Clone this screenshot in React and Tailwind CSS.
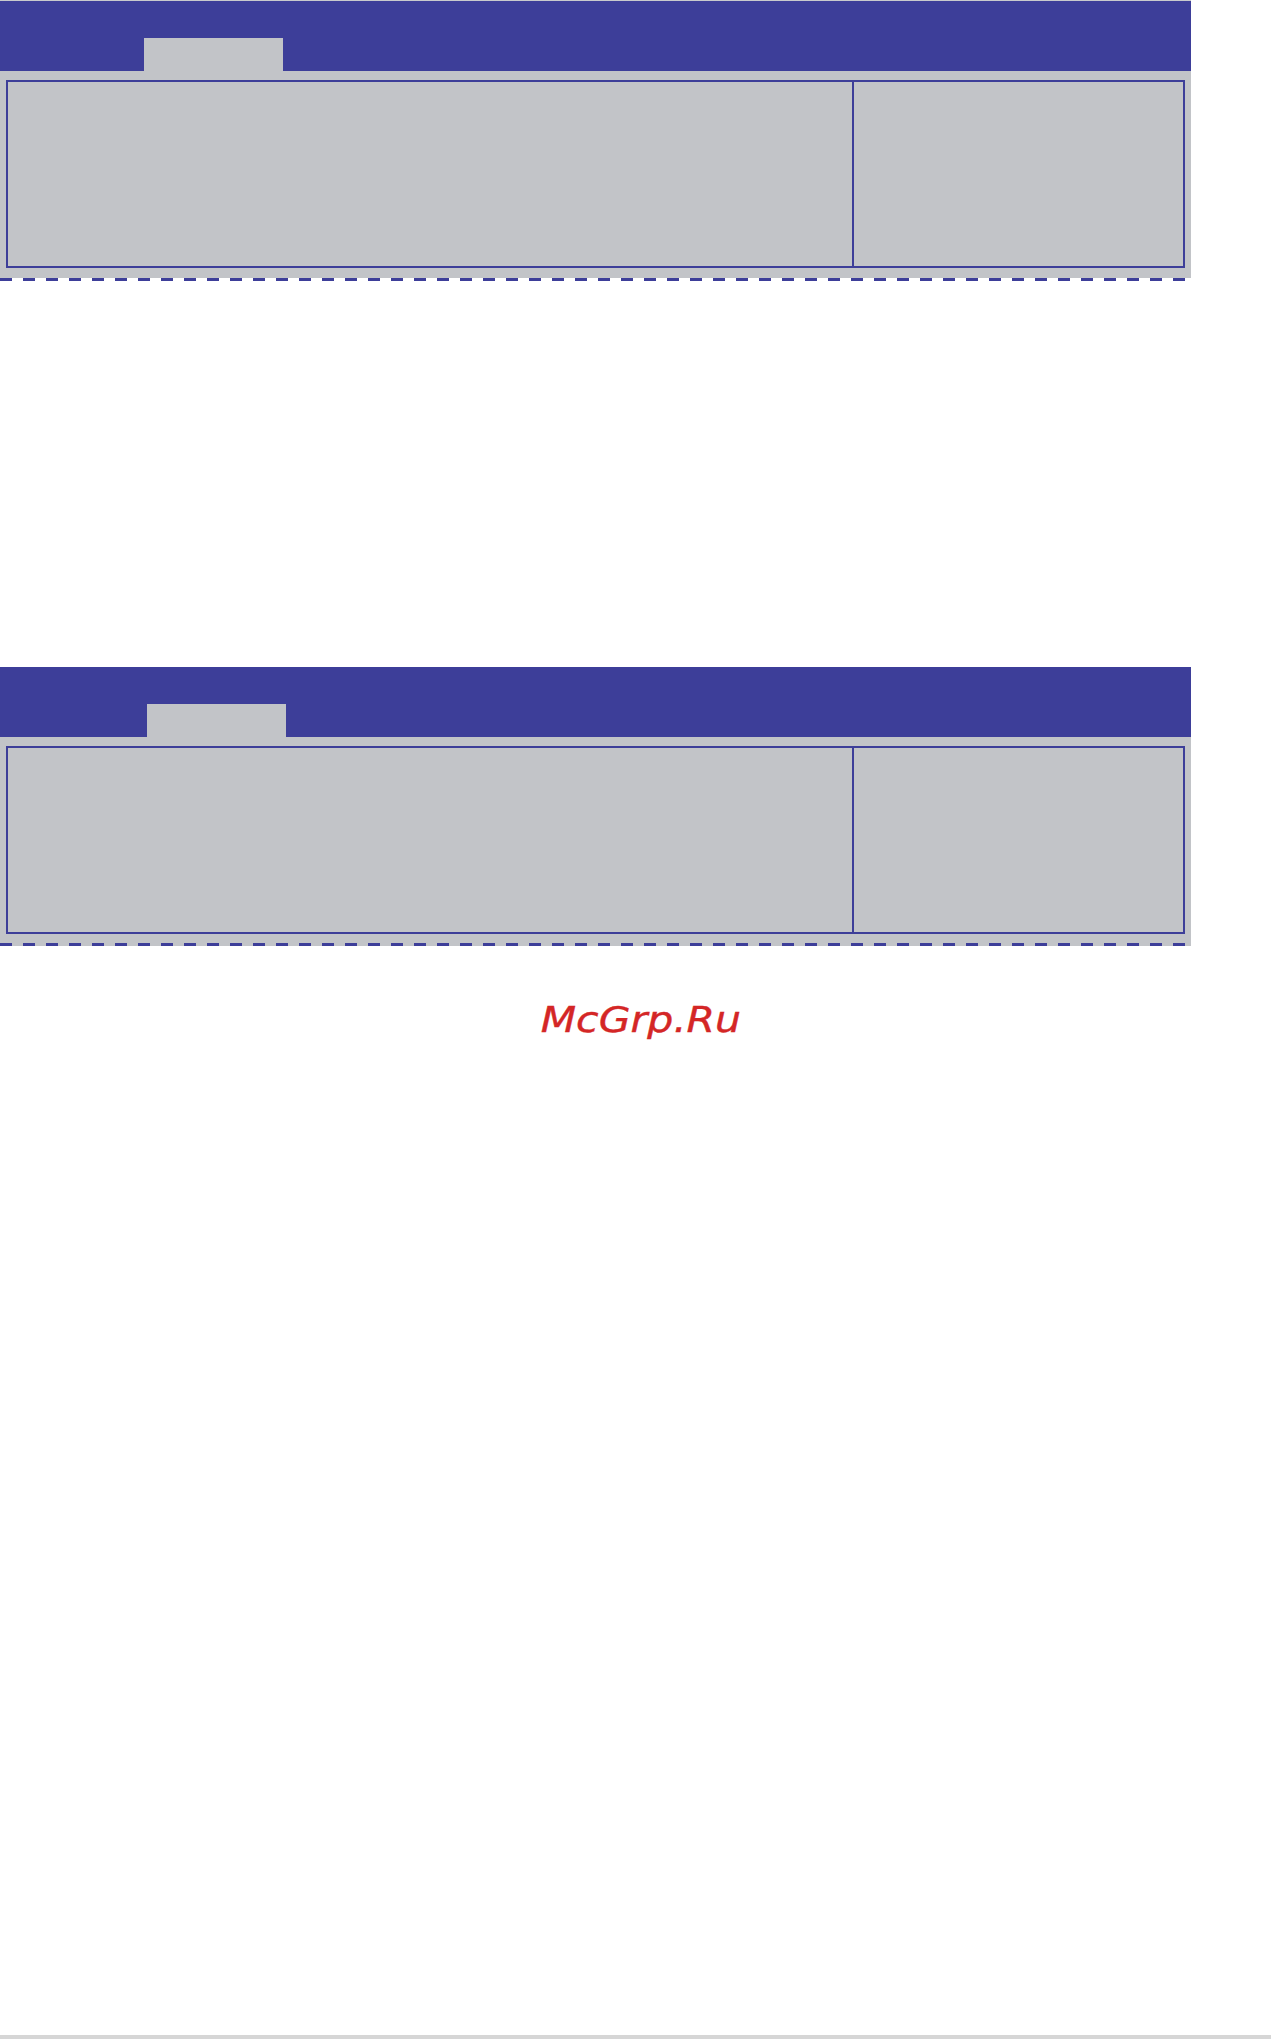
export default function App() {
  const Panel = ({ tabLeft, first }) => (
    <div className="w-[1191px]">
      {first && <div className="h-px bg-[#c9cacd]" />}
      {/* title bar with the raised tab */}
      <div className="relative h-[70px] bg-[#3d3e99]">
        <div
          className={`absolute bottom-0 h-[33px] w-[139px] bg-[#c2c4c8] ${tabLeft}`}
        />
      </div>
      {/* body with the two-column frame */}
      <div className={`bg-[#c2c4c8] px-[6px] pt-[9px] ${first ? "pb-[10px]" : "pb-[9px]"}`}>
        <div className="flex h-[188px] border-2 border-[#3d3e99]">
          <div className="w-[846px] border-r-2 border-[#3d3e99]" />
          <div className="flex-1" />
        </div>
      </div>
      {/* dashed bottom rule */}
      <div
        className={`h-[3px] bg-[repeating-linear-gradient(90deg,#3d3e99_0px,#3d3e99_12px,transparent_12px,transparent_23px)] ${first ? "bg-white" : "bg-[#c2c4c8]"}`}
      />
    </div>
  );

  return (
    <div className="relative flex h-[2039px] w-[1271px] flex-col bg-white">
      <Panel tabLeft="left-[144px]" first />
      <div className="h-[386px]" />
      <Panel tabLeft="left-[147px]" />
      <div className="flex justify-center pl-[10px] pt-[56px]">
        <span className="inline-block scale-x-[1.14] font-['DejaVu_Sans',sans-serif] text-[36px] italic leading-none text-[#d42626] [-webkit-text-stroke:0.4px_#d42626]">
          McGrp.Ru
        </span>
      </div>
      <div className="flex-1" />
      <div className="h-[4px] w-full bg-[#d6d6d6]" />
    </div>
  );
}
